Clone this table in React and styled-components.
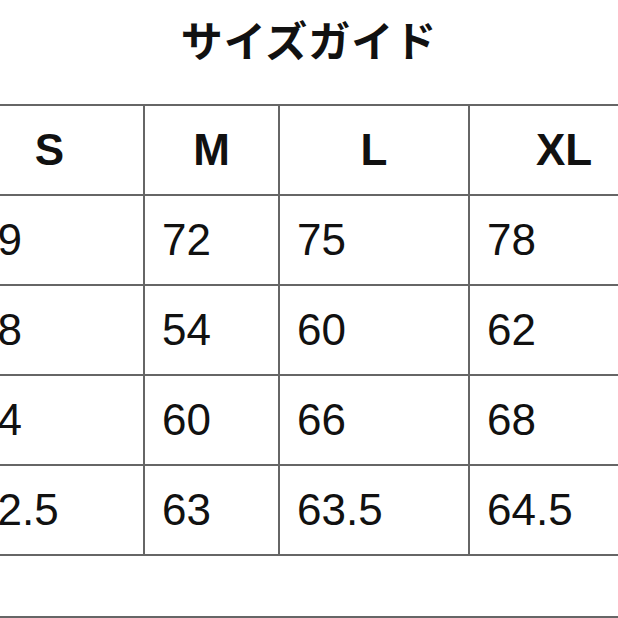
import styled, { createGlobalStyle } from "styled-components";

const GlobalStyle = createGlobalStyle`
  html, body {
    margin: 0;
    padding: 0;
    background: #fff;
    overflow: hidden;
  }
  body {
    font-family: "Liberation Sans", Arial, sans-serif;
    color: #111;
  }
`;

const Page = styled.div`
  width: 618px;
  height: 618px;
  overflow: hidden;
  display: flex;
  flex-direction: column;
`;

const Title = styled.h1`
  margin: 9px 0 35px;
  height: 60px;
  line-height: 60px;
  text-align: center;
  font-family: "Noto Sans CJK JP", "Noto Sans", sans-serif;
  font-weight: 700;
  font-size: 42px;
  letter-spacing: 1px;
  color: #111;
`;

const Table = styled.table`
  border-collapse: collapse;
  table-layout: fixed;
  width: 704px;
  margin-left: -46px;
  flex-shrink: 0;
`;

const Col = styled.col`
  width: ${(p) => p.$w}px;
`;

const Row = styled.tr`
  height: 90px;
`;

const HeadCell = styled.th`
  border: 2px solid #666;
  padding: 0;
  font-size: 44px;
  font-weight: 700;
  text-align: center;
  vertical-align: middle;
`;

const Cell = styled.td`
  border: 2px solid #666;
  padding: 0 0 0 17px;
  font-size: 44px;
  font-weight: 400;
  text-align: left;
  vertical-align: middle;
  white-space: nowrap;
  overflow: hidden;
`;

const Divider = styled.div`
  margin-top: 60px;
  flex-shrink: 0;
  border-top: 2px solid #666;
`;

const sizes = ["S", "M", "L", "XL"];
const rows = [
  ["69", "72", "75", "78"],
  ["48", "54", "60", "62"],
  ["54", "60", "66", "68"],
  ["62.5", "63", "63.5", "64.5"],
];
const widths = [189, 135, 190, 190];

export default function App() {
  return (
    <Page>
      <GlobalStyle />
      <Title>サイズガイド</Title>
      <Table>
        <colgroup>
          {widths.map((w, i) => (
            <Col key={i} $w={w} />
          ))}
        </colgroup>
        <thead>
          <Row>
            {sizes.map((s) => (
              <HeadCell key={s}>{s}</HeadCell>
            ))}
          </Row>
        </thead>
        <tbody>
          {rows.map((r, i) => (
            <Row key={i}>
              {r.map((v, j) => (
                <Cell key={j}>{v}</Cell>
              ))}
            </Row>
          ))}
        </tbody>
      </Table>
      <Divider />
    </Page>
  );
}
